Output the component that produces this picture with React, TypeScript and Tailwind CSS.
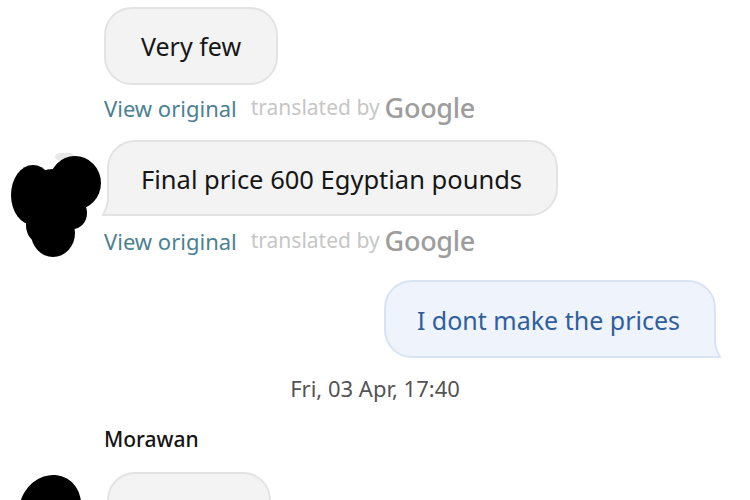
import React from 'react'

const font = { fontFamily: '"Noto Sans", "Open Sans", sans-serif' }

function LeftTail() {
  return (
    <svg className="absolute left-[-7px] bottom-[-2px]" width="24" height="24" viewBox="0 0 24 24">
      <path d="M6 0 L6 9 Q5 16 1 23 L24 23 L24 0 Z" fill="#f3f3f3" />
      <path d="M6 0 L6 9 Q5 16 1 23 L24 23" fill="none" stroke="#e3e3e3" strokeWidth="2" />
    </svg>
  )
}

function RightTail() {
  return (
    <svg className="absolute right-[-7px] bottom-[-2px]" width="24" height="24" viewBox="0 0 24 24">
      <path d="M18 0 L18 9 Q19 16 23 23 L0 23 L0 0 Z" fill="#eef3fc" />
      <path d="M18 0 L18 9 Q19 16 23 23 L0 23" fill="none" stroke="#d9e3f4" strokeWidth="2" />
    </svg>
  )
}

function Translated() {
  return (
    <div className="flex items-center h-[28px] whitespace-nowrap">
      <span className="text-[22px] text-[#4b8193]">View original</span>
      <span className="ml-[14px] text-[21px] text-[#c6c6c6]">translated by</span>
      <span className="ml-[5px] text-[27px] font-medium text-[#9d9d9d] tracking-[-0.3px]">Google</span>
    </div>
  )
}

function Scribble() {
  return (
    <svg width="96" height="104" viewBox="0 0 96 104">
      <ellipse cx="58" cy="4" rx="10" ry="5" fill="#e8e8e8" />
      <ellipse cx="26" cy="42" rx="22" ry="30" fill="#000" />
      <ellipse cx="68" cy="30" rx="26" ry="27" fill="#000" />
      <ellipse cx="46" cy="48" rx="28" ry="32" fill="#000" />
      <ellipse cx="46" cy="80" rx="22" ry="24" fill="#000" />
      <ellipse cx="33" cy="72" rx="14" ry="18" fill="#000" />
      <ellipse cx="66" cy="60" rx="14" ry="16" fill="#000" />
    </svg>
  )
}

export default function App() {
  return (
    <div className="w-[750px] h-[500px] bg-white overflow-hidden pt-[7px]" style={font}>
      {/* first incoming message */}
      <div className="pl-[104px]">
        <div className="inline-flex items-center h-[78px] px-[35px] pt-[1px] rounded-[28px] border-2 border-[#e3e3e3] bg-[#f3f3f3] text-[25px] text-[#161616]">
          Very few
        </div>
        <div className="mt-[9px]">
          <Translated />
        </div>
      </div>

      {/* second incoming with avatar */}
      <div className="flex mt-[18px]">
        <div className="w-[104px] shrink-0 flex items-end justify-end">
          <div className="mr-[1px] -mb-[2px]">
            <Scribble />
          </div>
        </div>
        <div>
          <div className="relative inline-flex items-center h-[76px] ml-[3px] pl-[32px] pr-[34px] pt-[3px] rounded-[28px] rounded-bl-none border-2 border-[#e3e3e3] bg-[#f3f3f3] text-[25.5px] text-[#161616] whitespace-nowrap">
            Final price 600 Egyptian pounds
            <LeftTail />
          </div>
          <div className="mt-[11px]">
            <Translated />
          </div>
        </div>
      </div>

      {/* outgoing */}
      <div className="flex justify-end pr-[34px] mt-[25px]">
        <div className="relative inline-flex items-center h-[78px] pl-[31px] pr-[34px] pt-[3px] rounded-[28px] rounded-br-none border-2 border-[#d9e3f4] bg-[#eef3fc] text-[25px] text-[#2f5f9e] whitespace-nowrap">
          I dont make the prices
          <RightTail />
        </div>
      </div>

      <div className="mt-[18px] h-[24px] flex items-center justify-center text-[22px] text-[#545454]">
        Fri, 03 Apr, 17:40
      </div>

      <div className="mt-[28px] pl-[104px] h-[24px] flex items-center text-[21px] font-medium text-[#141414]">
        Morawan
      </div>

      <div className="flex mt-[20px]">
        <div className="w-[107px] shrink-0 relative">
          <svg width="107" height="30" viewBox="0 0 107 30">
            <ellipse cx="50" cy="36" rx="30" ry="34" fill="#000" transform="rotate(30 50 36)" />
          </svg>
        </div>
        <div className="w-[164px] h-[60px] rounded-[28px] border-2 border-[#e3e3e3] bg-[#f3f3f3]" />
      </div>
    </div>
  )
}
